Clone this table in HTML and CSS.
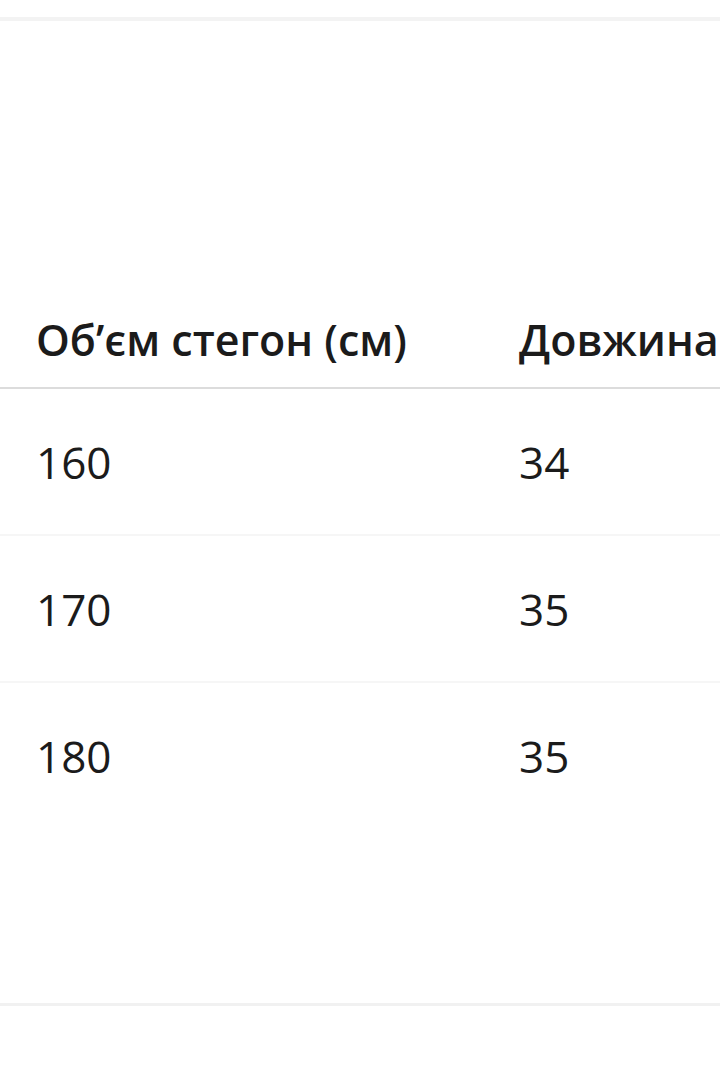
FILE: index.html
```html
<!DOCTYPE html>
<html lang="uk">
<head>
<meta charset="utf-8">
<link rel="stylesheet" href="styles.css">
</head>
<body>
<div class="page">
  <div class="panel">
    <table class="sizes">
      <thead>
        <tr>
          <th class="c1">Об’єм стегон (см)</th>
          <th class="c2">Довжина (см)</th>
        </tr>
      </thead>
      <tbody>
        <tr><td class="c1">160</td><td class="c2">34</td></tr>
        <tr><td class="c1">170</td><td class="c2">35</td></tr>
        <tr class="last"><td class="c1">180</td><td class="c2">35</td></tr>
      </tbody>
    </table>
  </div>
</div>
</body>
</html>
```

FILE: styles.css
```css
html, body {
  margin: 0;
  padding: 0;
  background: #ffffff;
}
body {
  font-family: "Open Sans", "Noto Sans", sans-serif;
  color: #1b1b1b;
  width: 720px;
  overflow: hidden;
}
.page {
  padding-top: 17px;
}
.panel {
  border-top: 4px solid #f3f3f3;
  border-bottom: 3px solid #f1f1f1;
  height: 989px;
  padding-top: 270px;
  box-sizing: border-box;
  overflow: hidden;
}
.sizes {
  border-collapse: collapse;
  width: 900px;
  table-layout: fixed;
}
.sizes th, .sizes td {
  text-align: left;
  white-space: nowrap;
  padding: 0;
  vertical-align: middle;
}
.sizes .c1 {
  width: 483px;
  padding-left: 36px;
}
.sizes th {
  font-size: 43px;
  font-weight: 600;
  height: 96px;
  border-bottom: 2px solid #dcdcdc;
}
.sizes td {
  font-size: 44px;
  font-weight: 400;
  height: 145px;
  border-bottom: 2px solid #f6f6f6;
}
.sizes tr.last td {
  border-bottom: none;
}
```
